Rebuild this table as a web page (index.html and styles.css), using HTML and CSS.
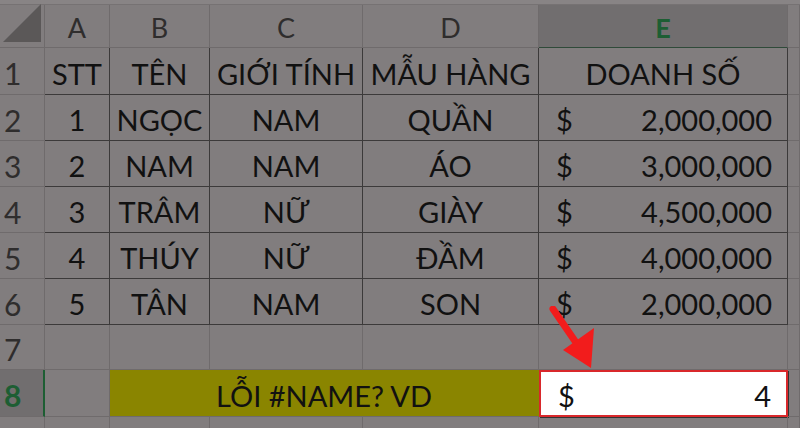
FILE: index.html
```html
<!DOCTYPE html>
<html>
<head>
<meta charset="utf-8">
<link rel="stylesheet" href="styles.css">
</head>
<body>
<div class="top"></div>
<div class="sheet">
  <div class="c corner"><div class="tri"></div></div>
  <div class="c ch">A</div>
  <div class="c ch">B</div>
  <div class="c ch">C</div>
  <div class="c ch">D</div>
  <div class="c ch sel">E</div>
  <div class="c ch"></div>

  <div class="c rh">1</div>
  <div class="c t">STT</div>
  <div class="c t">TÊN</div>
  <div class="c t">GIỚI TÍNH</div>
  <div class="c t">MẪU HÀNG</div>
  <div class="c t">DOANH SỐ</div>
  <div class="c"></div>

  <div class="c rh">2</div>
  <div class="c t">1</div>
  <div class="c t">NGỌC</div>
  <div class="c t">NAM</div>
  <div class="c t">QUẦN</div>
  <div class="c t money"><span>$</span><span>2,000,000</span></div>
  <div class="c"></div>

  <div class="c rh">3</div>
  <div class="c t">2</div>
  <div class="c t">NAM</div>
  <div class="c t">NAM</div>
  <div class="c t">ÁO</div>
  <div class="c t money"><span>$</span><span>3,000,000</span></div>
  <div class="c"></div>

  <div class="c rh">4</div>
  <div class="c t">3</div>
  <div class="c t">TRÂM</div>
  <div class="c t">NỮ</div>
  <div class="c t">GIÀY</div>
  <div class="c t money"><span>$</span><span>4,500,000</span></div>
  <div class="c"></div>

  <div class="c rh">5</div>
  <div class="c t">4</div>
  <div class="c t">THÚY</div>
  <div class="c t">NỮ</div>
  <div class="c t">ĐẦM</div>
  <div class="c t money"><span>$</span><span>4,000,000</span></div>
  <div class="c"></div>

  <div class="c rh">6</div>
  <div class="c t">5</div>
  <div class="c t">TÂN</div>
  <div class="c t">NAM</div>
  <div class="c t">SON</div>
  <div class="c t money"><span>$</span><span>2,000,000</span></div>
  <div class="c"></div>

  <div class="c rh">7</div>
  <div class="c"></div>
  <div class="c"></div>
  <div class="c"></div>
  <div class="c"></div>
  <div class="c"></div>
  <div class="c"></div>

  <div class="c rh rsel">8</div>
  <div class="c"></div>
  <div class="c merged">LỖI #NAME? VD</div>
  <div class="c money active"><span>$</span><span>4</span></div>
  <div class="c"></div>

  <div class="c rh"></div>
  <div class="c"></div>
  <div class="c"></div>
  <div class="c"></div>
  <div class="c"></div>
  <div class="c"></div>
  <div class="c"></div>
</div>
<svg class="arrow" width="60" height="70" viewBox="0 0 60 70">
  <line x1="4" y1="3" x2="28" y2="38" stroke="#f21c1c" stroke-width="7" stroke-linecap="round"/>
  <polygon points="14,44 45,22 42,62" fill="#f21c1c"/>
</svg>
</body>
</html>
```
FILE: styles.css
```css
html, body {
  margin: 0;
  padding: 0;
  background: #817d7e;
  width: 800px;
  height: 428px;
  overflow: hidden;
  font-family: Lato, "Open Sans", sans-serif;
}
.top {
  height: 4px;
  background: #888485;
  border-bottom: 1px solid #767273;
}
.sheet {
  display: grid;
  grid-template-columns: 45px 65px 100px 153px 176px 249px 12px;
  grid-template-rows: 43px 47px 46px 46px 46px 46px 46px 45px 47px 20px;
}
.c {
  box-sizing: border-box;
  border-right: 1px solid #6f6b6c;
  border-bottom: 1px solid #6f6b6c;
  display: flex;
  align-items: center;
  justify-content: center;
  padding-top: 4px;
  font-size: 29px;
  color: #111;
  white-space: nowrap;
}
.corner {
  align-items: flex-end;
  justify-content: flex-end;
  padding: 0 3px 5px 0;
}
.tri {
  width: 0;
  height: 0;
  border-left: 38px solid transparent;
  border-bottom: 38px solid #5b5858;
}
.ch {
  font-size: 27px;
  color: #2f2d2d;
  padding-top: 2px;
}
.ch.sel {
  background: #716e6f;
  color: #1d5e33;
  font-weight: 700;
  border-bottom: 1px solid #2f4a39;
}
.rh {
  font-size: 30px;
  color: #2f2d2d;
  justify-content: flex-start;
  padding-left: 4px;
}
.rh.rsel {
  background: #716e6f;
  color: #1d5e33;
  font-weight: 700;
  border-right: 2px solid #1d5e33;
}
.t {
  border-right-color: #3c3a3a;
  border-bottom-color: #3c3a3a;
}
.money {
  justify-content: space-between;
  padding-left: 17px;
  padding-right: 15px;
}
.merged {
  grid-column: span 3;
  background: #8a8500;
  border-right-color: #8a8500;
}
.active {
  background: #fff;
  border: 2px solid #d9282b;
  box-shadow: 1px 1px 0 #333;
}
.arrow {
  position: absolute;
  left: 549px;
  top: 306px;
}
```
